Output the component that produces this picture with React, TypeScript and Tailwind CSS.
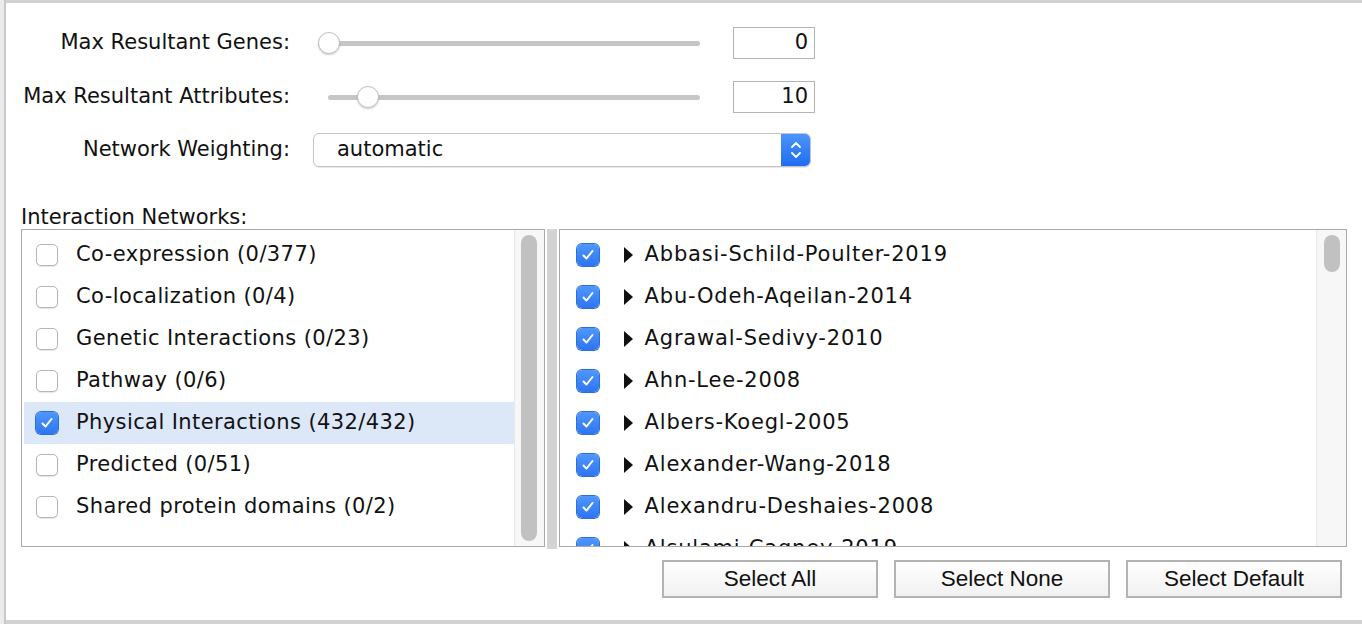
import React from "react";

const networks = [
  { label: "Co-expression (0/377)", checked: false },
  { label: "Co-localization (0/4)", checked: false },
  { label: "Genetic Interactions (0/23)", checked: false },
  { label: "Pathway (0/6)", checked: false },
  { label: "Physical Interactions (432/432)", checked: true },
  { label: "Predicted (0/51)", checked: false },
  { label: "Shared protein domains (0/2)", checked: false },
];

const sources = [
  "Abbasi-Schild-Poulter-2019",
  "Abu-Odeh-Aqeilan-2014",
  "Agrawal-Sedivy-2010",
  "Ahn-Lee-2008",
  "Albers-Koegl-2005",
  "Alexander-Wang-2018",
  "Alexandru-Deshaies-2008",
  "Alsulami-Cagney-2019",
];

function Checkbox({ checked }: { checked: boolean }) {
  if (checked) {
    return (
      <span className="flex h-[22px] w-[22px] shrink-0 items-center justify-center rounded-[5px] bg-gradient-to-b from-[#4f97fb] to-[#2e74f2] shadow-[0_0_0_1px_#2f6fd8]">
        <svg width="14" height="14" viewBox="0 0 14 14">
          <path d="M2.5 7.5 L5.5 10.5 L11.5 3" fill="none" stroke="white" strokeWidth="2" strokeLinecap="round" strokeLinejoin="round" />
        </svg>
      </span>
    );
  }
  return (
    <span className="block h-[22px] w-[22px] shrink-0 rounded-[5px] border border-[#b6b6b6] bg-white shadow-[0_1px_1px_rgba(0,0,0,0.1)]" />
  );
}

function Slider({ trackWidth, thumbLeft }: { trackWidth: number; thumbLeft: number }) {
  return (
    <div className="relative h-[22px]" style={{ width: trackWidth }}>
      <div className="absolute left-0 right-0 top-[9px] h-[5px] rounded-full bg-[#c6c6c6]" />
      <div
        className="absolute top-0 h-[22px] w-[22px] rounded-full border border-[#c2c2c2] bg-white shadow-[0_1px_2px_rgba(0,0,0,0.2)]"
        style={{ left: thumbLeft }}
      />
    </div>
  );
}

function Button({ children }: { children: React.ReactNode }) {
  return (
    <button className="h-[38px] w-[216px] border-2 border-[#b3b3b3] bg-gradient-to-b from-white to-[#f1f1f1] font-['Liberation_Sans',sans-serif] text-[22.5px] text-[#111]">
      {children}
    </button>
  );
}

export default function App() {
  return (
    <div className="flex h-[624px] w-[1362px] overflow-hidden bg-[#e9e9e9] font-['DejaVu_Sans',sans-serif] text-[21px] text-[#111]">
      {/* window behind */}
      <div className="w-[6px] shrink-0 border-r-2 border-[#c9c9c9] bg-[#ebebeb]" />

      <div className="flex flex-1 flex-col border-t-[3px] border-b-[4px] border-[#d2d2d2] bg-white pl-[15px] pt-[23px]">
        {/* Max Resultant Genes */}
        <div className="flex h-[34px] items-center">
          <div className="w-[269px] text-right">Max Resultant Genes:</div>
          <div className="ml-[28px]">
            <Slider trackWidth={382} thumbLeft={0} />
          </div>
          <div className="ml-[33px] flex h-[32px] w-[82px] items-center justify-end border border-[#b4b4b4] pr-[6px]">0</div>
        </div>

        {/* Max Resultant Attributes */}
        <div className="mt-[20px] flex h-[34px] items-center">
          <div className="w-[269px] text-right">Max Resultant Attributes:</div>
          <div className="ml-[38px]">
            <Slider trackWidth={372} thumbLeft={29} />
          </div>
          <div className="ml-[33px] flex h-[32px] w-[82px] items-center justify-end border border-[#b4b4b4] pr-[6px]">10</div>
        </div>

        {/* Network Weighting */}
        <div className="mt-[19px] flex h-[34px] items-center">
          <div className="w-[269px] text-right">Network Weighting:</div>
          <div className="ml-[23px] flex h-[34px] w-[498px] items-stretch overflow-hidden rounded-[6px] border border-[#c4c4c4] shadow-[0_1px_1px_rgba(0,0,0,0.1)]">
            <div className="flex flex-1 items-center pl-[23px]">automatic</div>
            <div className="flex w-[29px] flex-col items-center justify-center bg-gradient-to-b from-[#4b95fb] to-[#1e6cf1]">
              <svg width="12" height="20" viewBox="0 0 12 20">
                <path d="M2 7 L6 3 L10 7" fill="none" stroke="white" strokeWidth="1.8" strokeLinecap="round" strokeLinejoin="round" />
                <path d="M2 13 L6 17 L10 13" fill="none" stroke="white" strokeWidth="1.8" strokeLinecap="round" strokeLinejoin="round" />
              </svg>
            </div>
          </div>
        </div>

        <div className="mt-[39px] leading-[22px]">Interaction Networks:</div>

        {/* Lists */}
        <div className="mt-[1px] flex h-[320px] w-[1326px]">
          <div className="flex h-[318px] w-[524px] border border-[#a9a9a9]">
            <div className="flex-1 pt-[4px] tracking-[0.4px]">
              {networks.map((n) => (
                <div
                  key={n.label}
                  className={`flex h-[42px] items-center ${n.checked ? "ml-[2px] bg-[#dce7f8] pl-[12px]" : "pl-[14px]"}`}
                >
                  <Checkbox checked={n.checked} />
                  <span className="ml-[18px] whitespace-nowrap">{n.label}</span>
                </div>
              ))}
            </div>
            <div className="flex w-[30px] justify-center border-l border-[#e8e8e8] bg-[#f7f7f7] py-[5px]">
              <div className="w-[16px] rounded-full bg-[#c1c1c1]" />
            </div>
          </div>

          <div className="mx-[2px] h-[320px] w-[10px] bg-[#d3d3d3]" />

          <div className="flex h-[318px] w-[789px] overflow-hidden border border-[#a9a9a9]">
            <div className="flex-1 overflow-hidden pt-[4px] tracking-[0.8px]">
              {sources.map((s) => (
                <div key={s} className="flex h-[42px] items-center pl-[17px]">
                  <Checkbox checked />
                  <svg className="ml-[25px] shrink-0" width="9" height="16" viewBox="0 0 9 16">
                    <path d="M0 0 L9 8 L0 16 Z" fill="#111" />
                  </svg>
                  <span className="ml-[12px] whitespace-nowrap">{s}</span>
                </div>
              ))}
            </div>
            <div className="flex w-[30px] flex-col items-center border-l border-[#e8e8e8] bg-[#f7f7f7] pt-[5px]">
              <div className="h-[37px] w-[16px] rounded-full bg-[#c1c1c1]" />
            </div>
          </div>
        </div>

        {/* Buttons */}
        <div className="mt-[11px] flex w-[1326px] justify-end gap-[16px] pr-[5px]">
          <Button>Select All</Button>
          <Button>Select None</Button>
          <Button>Select Default</Button>
        </div>
      </div>
    </div>
  );
}
